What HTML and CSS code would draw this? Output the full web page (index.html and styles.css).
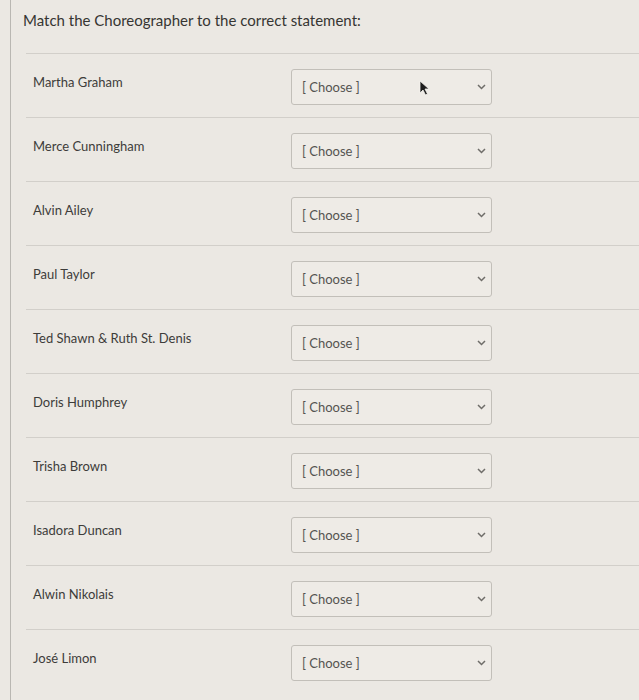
FILE: index.html
```html
<!DOCTYPE html>
<html lang="en">
<head>
  <meta charset="UTF-8" />
  <meta name="viewport" content="width=device-width, initial-scale=1.0"/>
  <title>Matching Question</title>
  <link rel="stylesheet" href="styles.css">
</head>
<body>
  <div class="question">
    <h1 class="question-text">Match the Choreographer to the correct statement:</h1>

    <div class="answers">
      <div class="answer-row">
        <label class="answer-label">Martha Graham</label>
        <div class="select-wrap">
          <select class="answer-select"><option>[ Choose ]</option></select>
          <svg class="chevron" width="9" height="6" viewBox="0 0 9 6"><polyline points="1,1 4.5,4.5 8,1" /></svg>
          <svg class="cursor" width="11" height="16" viewBox="0 0 11 16"><path d="M1 1 L1 13 L4 10 L6.5 15 L8.5 14 L6 9 L10 9 Z" /></svg>
        </div>
      </div>
      <div class="answer-row">
        <label class="answer-label">Merce Cunningham</label>
        <div class="select-wrap">
          <select class="answer-select"><option>[ Choose ]</option></select>
          <svg class="chevron" width="9" height="6" viewBox="0 0 9 6"><polyline points="1,1 4.5,4.5 8,1" /></svg>
        </div>
      </div>
      <div class="answer-row">
        <label class="answer-label">Alvin Ailey</label>
        <div class="select-wrap">
          <select class="answer-select"><option>[ Choose ]</option></select>
          <svg class="chevron" width="9" height="6" viewBox="0 0 9 6"><polyline points="1,1 4.5,4.5 8,1" /></svg>
        </div>
      </div>
      <div class="answer-row">
        <label class="answer-label">Paul Taylor</label>
        <div class="select-wrap">
          <select class="answer-select"><option>[ Choose ]</option></select>
          <svg class="chevron" width="9" height="6" viewBox="0 0 9 6"><polyline points="1,1 4.5,4.5 8,1" /></svg>
        </div>
      </div>
      <div class="answer-row">
        <label class="answer-label">Ted Shawn &amp; Ruth St. Denis</label>
        <div class="select-wrap">
          <select class="answer-select"><option>[ Choose ]</option></select>
          <svg class="chevron" width="9" height="6" viewBox="0 0 9 6"><polyline points="1,1 4.5,4.5 8,1" /></svg>
        </div>
      </div>
      <div class="answer-row">
        <label class="answer-label">Doris Humphrey</label>
        <div class="select-wrap">
          <select class="answer-select"><option>[ Choose ]</option></select>
          <svg class="chevron" width="9" height="6" viewBox="0 0 9 6"><polyline points="1,1 4.5,4.5 8,1" /></svg>
        </div>
      </div>
      <div class="answer-row">
        <label class="answer-label">Trisha Brown</label>
        <div class="select-wrap">
          <select class="answer-select"><option>[ Choose ]</option></select>
          <svg class="chevron" width="9" height="6" viewBox="0 0 9 6"><polyline points="1,1 4.5,4.5 8,1" /></svg>
        </div>
      </div>
      <div class="answer-row">
        <label class="answer-label">Isadora Duncan</label>
        <div class="select-wrap">
          <select class="answer-select"><option>[ Choose ]</option></select>
          <svg class="chevron" width="9" height="6" viewBox="0 0 9 6"><polyline points="1,1 4.5,4.5 8,1" /></svg>
        </div>
      </div>
      <div class="answer-row">
        <label class="answer-label">Alwin Nikolais</label>
        <div class="select-wrap">
          <select class="answer-select"><option>[ Choose ]</option></select>
          <svg class="chevron" width="9" height="6" viewBox="0 0 9 6"><polyline points="1,1 4.5,4.5 8,1" /></svg>
        </div>
      </div>
      <div class="answer-row">
        <label class="answer-label">José Limon</label>
        <div class="select-wrap">
          <select class="answer-select"><option>[ Choose ]</option></select>
          <svg class="chevron" width="9" height="6" viewBox="0 0 9 6"><polyline points="1,1 4.5,4.5 8,1" /></svg>
        </div>
      </div>
    </div>
  </div>
</body>
</html>
```

FILE: styles.css
```css
body {
  margin: 0;
  background: #ebe8e3;
  font-family: Lato, "Liberation Sans", sans-serif;
  color: #3b3a38;
}

.question {
  margin-left: 10px;
  min-height: 700px;
  border-left: 1px solid #b9b7b2;
  padding: 9px 0 0 0;
}

.question-text {
  font-size: 15px;
  font-weight: normal;
  line-height: 22px;
  margin: 0 0 22px 12px;
  color: #363532;
}

.answers {
  margin-left: 15px;
}

.answer-row {
  display: flex;
  align-items: flex-start;
  height: 48px;
  padding: 15px 0 0 7px;
  border-top: 1px solid #d2cfca;
}

.answer-label {
  width: 258px;
  margin-top: 5px;
  font-size: 13px;
  line-height: 16px;
  color: #3d3c3a;
}

.select-wrap {
  position: relative;
  width: 201px;
}

.answer-select {
  appearance: none;
  -webkit-appearance: none;
  width: 201px;
  height: 36px;
  padding: 0 10px;
  border: 1px solid #c2bfb9;
  border-radius: 3px;
  background: #eeebe6;
  font-family: Lato, "Liberation Sans", sans-serif;
  font-size: 13px;
  color: #555451;
}

.chevron {
  position: absolute;
  right: 6px;
  top: 15px;
  pointer-events: none;
}

.chevron polyline {
  fill: none;
  stroke: #6f6d69;
  stroke-width: 1.5;
}

.cursor {
  position: absolute;
  left: 128px;
  top: 11px;
  pointer-events: none;
}

.cursor path {
  fill: #1c1c1c;
  stroke: #f4f2ee;
  stroke-width: 0.8;
}
```
